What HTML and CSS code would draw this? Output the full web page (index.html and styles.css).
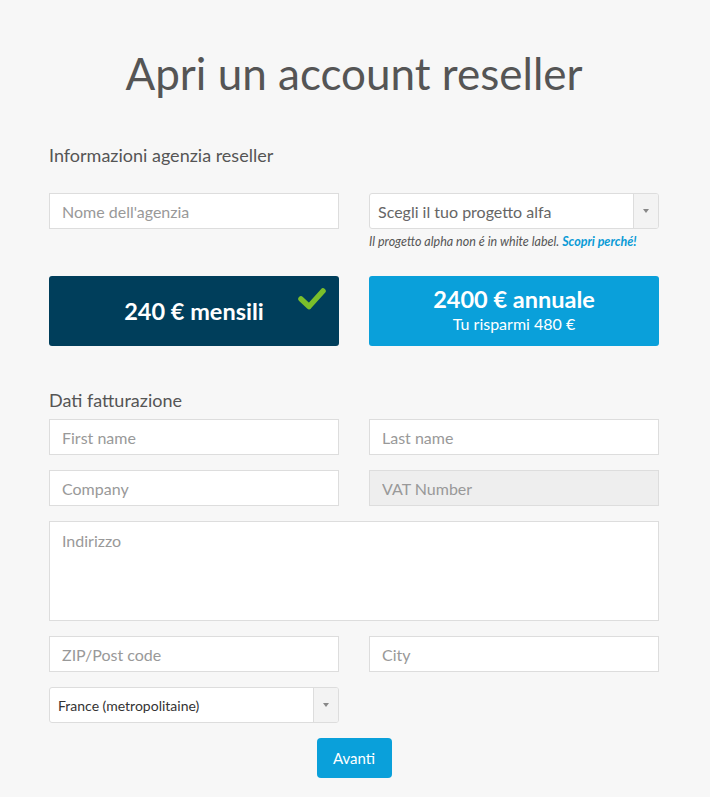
FILE: index.html
```html
<!DOCTYPE html>
<html lang="it">
<head>
<meta charset="utf-8">
<title>Apri un account reseller</title>
<link rel="stylesheet" href="styles.css">
</head>
<body>
<div class="page">
  <h1 class="title">Apri un account reseller</h1>

  <h2 class="section first">Informazioni agenzia reseller</h2>
  <div class="grid2 row-top">
    <div class="field">
      <input class="input" type="text" placeholder="Nome dell'agenzia">
    </div>
    <div class="field">
      <div class="select">
        <span class="select-text muted">Scegli il tuo progetto alfa</span>
        <span class="select-arrow"><span class="tri"></span></span>
      </div>
      <p class="note">Il progetto alpha non é in white label. <a class="note-link" href="#">Scopri perché!</a></p>
    </div>
  </div>

  <div class="grid2 plans">
    <div class="plan plan-dark">
      <span class="plan-main">240 € mensili</span>
      <svg class="check" width="30" height="24" viewBox="0 0 30 24"><path d="M4 13 L12 20.5 L26 5" fill="none" stroke="#7bbe2b" stroke-width="5.5" stroke-linecap="round" stroke-linejoin="round"/></svg>
    </div>
    <div class="plan plan-light">
      <span class="plan-main">2400 € annuale</span>
      <span class="plan-sub">Tu risparmi 480 €</span>
    </div>
  </div>

  <h2 class="section second">Dati fatturazione</h2>
  <div class="stack">
    <div class="grid2">
      <input class="input" type="text" placeholder="First name">
      <input class="input" type="text" placeholder="Last name">
    </div>
    <div class="grid2">
      <input class="input" type="text" placeholder="Company">
      <input class="input disabled" type="text" placeholder="VAT Number" disabled>
    </div>
    <textarea class="input area" placeholder="Indirizzo"></textarea>
    <div class="grid2">
      <input class="input" type="text" placeholder="ZIP/Post code">
      <input class="input" type="text" placeholder="City">
    </div>
    <div class="grid2">
      <div class="select">
        <span class="select-text dark">France (metropolitaine)</span>
        <span class="select-arrow"><span class="tri"></span></span>
      </div>
    </div>
    <div class="actions">
      <button class="btn" type="button">Avanti</button>
    </div>
  </div>
</div>
</body>
</html>
```
FILE: styles.css
```css
* { box-sizing: border-box; }
html, body { margin: 0; padding: 0; }
body {
  background: #f7f7f7;
  font-family: Lato, "Open Sans", "Liberation Sans", sans-serif;
  color: #555;
  width: 710px;
  height: 797px;
  overflow: hidden;
}
.page {
  padding: 0 51px 0 49px;
}
.title {
  margin: 0;
  padding-top: 44px;
  font-size: 44px;
  line-height: 58px;
  font-weight: 400;
  text-align: center;
  color: #555;
}
.section {
  margin: 0;
  font-size: 18px;
  line-height: 22px;
  font-weight: 400;
  color: #555;
}
.section.first { margin-top: 42px; }
.section.second { margin-top: 43px; margin-bottom: 8px; }
.grid2 {
  display: grid;
  grid-template-columns: 290px 290px;
  column-gap: 30px;
}
.row-top { margin-top: 27px; }
.field { display: flex; flex-direction: column; }
.input {
  display: block;
  width: 100%;
  height: 36px;
  margin: 0;
  border: 1px solid #dddddd;
  background: #fff;
  padding: 0 12px;
  font-family: Lato, "Open Sans", sans-serif;
  font-size: 16px;
  color: #555;
  outline: none;
  border-radius: 0;
}
.input::placeholder { color: #999; opacity: 1; }
.input.disabled { background: #eeeeee; }
.area {
  height: 100px;
  padding: 9px 12px;
  resize: none;
  line-height: 20px;
}
.select {
  display: flex;
  height: 36px;
  border: 1px solid #dddddd;
  border-radius: 3px;
  background: #fff;
  overflow: hidden;
}
.select-text {
  flex: 1;
  display: flex;
  align-items: center;
  padding-left: 8px;
}
.select-text.muted { font-size: 16px; color: #666; }
.select-text.dark { font-size: 14px; color: #333; }
.select-arrow {
  width: 25px;
  display: flex;
  align-items: center;
  justify-content: center;
  background: #f3f3f3;
  border-left: 1px solid #dddddd;
}
.tri {
  width: 0;
  height: 0;
  border-left: 3.5px solid transparent;
  border-right: 3.5px solid transparent;
  border-top: 4px solid #888;
}
.note {
  margin: 6px 0 0;
  font-size: 12.5px;
  line-height: 14px;
  font-style: italic;
  color: #555;
}
.note-link {
  color: #0a9bd6;
  font-weight: 700;
  text-decoration: none;
}
.plans { margin-top: 27px; }
.plan {
  position: relative;
  height: 70px;
  border-radius: 3px;
  color: #fff;
  display: flex;
  flex-direction: column;
  align-items: center;
  justify-content: center;
}
.plan-dark { background: #003e5b; }
.plan-light { background: #0aa0da; }
.plan-main {
  font-size: 23.5px;
  font-weight: 700;
  line-height: 28px;
}
.plan-light .plan-main { margin-top: -2px; }
.plan-sub {
  font-size: 16px;
  line-height: 22px;
}
.check {
  position: absolute;
  top: 10px;
  right: 12px;
}
.stack {
  display: flex;
  flex-direction: column;
  gap: 15px;
}
.actions {
  display: flex;
  justify-content: center;
}
.btn {
  width: 75px;
  height: 40px;
  border: none;
  border-radius: 4px;
  background: #0aa0da;
  color: #fff;
  font-family: Lato, "Open Sans", sans-serif;
  font-size: 15px;
  cursor: pointer;
}
```
